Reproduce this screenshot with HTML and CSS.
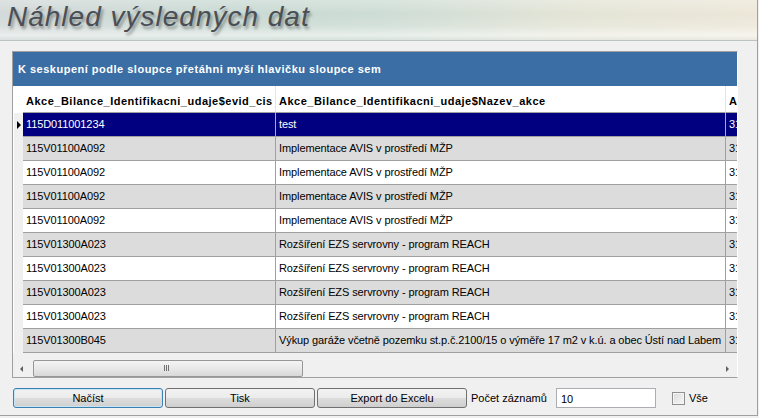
FILE: index.html
```html
<!DOCTYPE html>
<html lang="cs">
<head>
    <meta charset="UTF-8">
    <title>Náhled výsledných dat</title>
    <link rel="stylesheet" href="styles.css">
</head>
<body>
    <div class="window">
        <div class="title-bar">
            <h1 class="title">Náhled výsledných dat</h1>
        </div>

        <div class="main">
            <div class="data-grid">
                <div class="group-panel">K seskupení podle sloupce přetáhni myší hlavičku sloupce sem</div>

                <div class="grid-scroll">
                    <div class="grid-row grid-head">
                        <div class="cell indicator"></div>
                        <div class="cell">Akce_Bilance_Identifikacni_udaje$evid_cis</div>
                        <div class="cell">Akce_Bilance_Identifikacni_udaje$Nazev_akce</div>
                        <div class="cell">Al</div>
                    </div>
                    <div class="grid-row selected">
                        <div class="cell indicator"><span class="arrow"></span></div>
                        <div class="cell">115D011001234</div>
                        <div class="cell">test</div>
                        <div class="cell">31</div>
                    </div>
                    <div class="grid-row alt">
                        <div class="cell indicator"></div>
                        <div class="cell">115V01100A092</div>
                        <div class="cell">Implementace AVIS v prostředí MŽP</div>
                        <div class="cell">31</div>
                    </div>
                    <div class="grid-row">
                        <div class="cell indicator"></div>
                        <div class="cell">115V01100A092</div>
                        <div class="cell">Implementace AVIS v prostředí MŽP</div>
                        <div class="cell">31</div>
                    </div>
                    <div class="grid-row alt">
                        <div class="cell indicator"></div>
                        <div class="cell">115V01100A092</div>
                        <div class="cell">Implementace AVIS v prostředí MŽP</div>
                        <div class="cell">31</div>
                    </div>
                    <div class="grid-row">
                        <div class="cell indicator"></div>
                        <div class="cell">115V01100A092</div>
                        <div class="cell">Implementace AVIS v prostředí MŽP</div>
                        <div class="cell">31</div>
                    </div>
                    <div class="grid-row alt">
                        <div class="cell indicator"></div>
                        <div class="cell">115V01300A023</div>
                        <div class="cell">Rozšíření EZS servrovny - program REACH</div>
                        <div class="cell">31</div>
                    </div>
                    <div class="grid-row">
                        <div class="cell indicator"></div>
                        <div class="cell">115V01300A023</div>
                        <div class="cell">Rozšíření EZS servrovny - program REACH</div>
                        <div class="cell">31</div>
                    </div>
                    <div class="grid-row alt">
                        <div class="cell indicator"></div>
                        <div class="cell">115V01300A023</div>
                        <div class="cell">Rozšíření EZS servrovny - program REACH</div>
                        <div class="cell">31</div>
                    </div>
                    <div class="grid-row">
                        <div class="cell indicator"></div>
                        <div class="cell">115V01300A023</div>
                        <div class="cell">Rozšíření EZS servrovny - program REACH</div>
                        <div class="cell">31</div>
                    </div>
                    <div class="grid-row alt">
                        <div class="cell indicator"></div>
                        <div class="cell">115V01300B045</div>
                        <div class="cell">Výkup garáže včetně pozemku st.p.č.2100/15 o výměře 17 m2 v k.ú. a obec Ústí nad Labem</div>
                        <div class="cell">31</div>
                    </div>
                </div>

                <div class="hscroll">
                    <span class="hscroll-arrow left"></span>
                    <div class="hscroll-track">
                        <div class="hscroll-thumb"><span class="grip"></span></div>
                    </div>
                    <span class="hscroll-arrow right"></span>
                </div>
            </div>

            <div class="controls">
                <button class="btn focused">Načíst</button>
                <button class="btn">Tisk</button>
                <button class="btn">Export do Excelu</button>
                <label class="count-label" for="count">Počet záznamů</label>
                <input class="count-input" id="count" type="text" value="10">
                <label class="check-all"><span class="checkbox"></span>Vše</label>
            </div>
        </div>
    </div>
</body>
</html>
```

FILE: styles.css
```css
html, body {
    margin: 0;
    padding: 0;
    background: #f0f0f0;
}

body {
    font-family: "Liberation Sans", Arial, sans-serif;
    font-size: 11px;
    color: #000;
}

.window {
    width: 757px;
    height: 415px;
    border-right: 1px solid #a0a0a0;
    border-bottom: 1px solid #a0a0a0;
    background: #f0f0f0;
    overflow: hidden;
}

/* title band */
.title-bar {
    height: 40px;
    border-bottom: 1px solid #bcc4c1;
    background:
        linear-gradient(to bottom, rgba(255, 255, 255, 0.25) 0%, rgba(255, 255, 255, 0) 35%, rgba(255, 255, 255, 0.15) 65%, rgba(255, 255, 255, 0.55) 88%, rgba(230, 235, 232, 0.4) 100%),
        linear-gradient(to right, #d2d9d8 0%, #c9d9d3 30%, #cddcd5 50%, #e3e4d6 75%, #ece7d8 100%);
}

.title {
    margin: 0;
    padding: 1px 0 0 7px;
    font-family: "Liberation Sans", Arial, sans-serif;
    font-size: 28px;
    font-weight: normal;
    font-style: italic;
    letter-spacing: 1px;
    line-height: 32px;
    color: #4a4f56;
    text-shadow: 2px 3px 3px rgba(0, 0, 0, 0.35);
}

.main {
    padding: 10px 0 0 12px;
}

/* data grid */
.data-grid {
    width: 724px;
    border: 1px solid #a0a0a0;
    border-right-color: #ffffff;
    border-bottom-color: #a0a0a0;
    background: #f0f0f0;
}

.group-panel {
    height: 34px;
    line-height: 35px;
    padding-left: 5px;
    background: #3b6ea5;
    color: #ffffff;
    font-weight: bold;
    letter-spacing: 0.5px;
    white-space: nowrap;
}

.grid-scroll {
    width: 724px;
    overflow: hidden;
}

.grid-row {
    display: grid;
    grid-template-columns: 10px 253px 450px 12px;
    height: 24px;
    background: #ffffff;
}

.grid-row.alt {
    background: #dcdcdc;
}

.cell {
    padding-left: 3px;
    line-height: 23px;
    letter-spacing: -0.1px;
    border-right: 1px solid #a0a0a0;
    border-bottom: 1px solid #a0a0a0;
    white-space: nowrap;
    overflow: hidden;
}

.cell:last-child {
    border-right: none;
}

.cell.indicator {
    position: relative;
    padding: 0;
    background: #f0f0f0;
    border-right: none;
    border-bottom: none;
    border-left: 1px solid #ffffff;
}

.grid-head {
    height: 27px;
    background: #ffffff;
}

.grid-head .cell {
    line-height: 30px;
    font-weight: bold;
    letter-spacing: 0.5px;
    border-right-color: #e4e4e4;
    border-bottom-color: #a0a0a0;
}

.grid-head .cell.indicator {
    background: #ffffff;
}

.grid-row.selected {
    background: #000080;
    color: #ffffff;
}

.grid-row.selected .cell {
    border-right-color: #a8a8c8;
}

.arrow {
    position: absolute;
    left: 3px;
    top: 8px;
    width: 0;
    height: 0;
    border-top: 4px solid transparent;
    border-bottom: 4px solid transparent;
    border-left: 4px solid #000000;
}

/* horizontal scrollbar */
.hscroll {
    display: flex;
    align-items: center;
    height: 17px;
    margin-top: 7px;
}

.hscroll-arrow {
    width: 0;
    height: 0;
    border-top: 3px solid transparent;
    border-bottom: 3px solid transparent;
}

.hscroll-arrow.left {
    margin: 0 0 0 7px;
    border-right: 3px solid #606060;
}

.hscroll-arrow.right {
    margin: 0 8px 0 0;
    border-left: 3px solid #606060;
}

.hscroll-track {
    flex: 1;
    height: 17px;
    padding: 0 0 0 10px;
}

.hscroll-thumb {
    position: relative;
    width: 268px;
    height: 15px;
    border: 1px solid #979797;
    border-radius: 2px;
    background: linear-gradient(to bottom, #f4f4f4 0%, #e8e8e8 50%, #d8d8d8 100%);
}

.grip {
    position: absolute;
    left: 130px;
    top: 4px;
    width: 1px;
    height: 6px;
    background: #707070;
    box-shadow: 2px 0 0 #707070, 4px 0 0 #707070;
}

/* bottom controls */
.controls {
    display: flex;
    align-items: center;
    height: 20px;
    margin-top: 10px;
    padding-left: 1px;
}

.btn {
    width: 150px;
    height: 20px;
    margin-right: 2px;
    padding: 0;
    border: 1px solid #707070;
    border-radius: 3px;
    background: linear-gradient(to bottom, #f2f2f2 0%, #ebebeb 50%, #dddddd 51%, #cfcfcf 100%);
    font-family: "Liberation Sans", Arial, sans-serif;
    font-size: 11px;
    color: #000000;
}

.btn.focused {
    border-color: #3c7fb1;
    box-shadow: inset 0 0 0 1px #c4e5f6;
}

.count-label {
    margin-left: 2px;
    width: 85px;
}

.count-input {
    box-sizing: border-box;
    width: 100px;
    height: 20px;
    margin: 0;
    padding: 1px 4px 0;
    border: 1px solid #abadb3;
    background: #ffffff;
    font-family: "Liberation Sans", Arial, sans-serif;
    font-size: 11px;
}

.check-all {
    display: flex;
    align-items: center;
    margin-left: 16px;
}

.checkbox {
    box-sizing: border-box;
    width: 13px;
    height: 13px;
    margin-right: 4px;
    border: 1px solid #8f8f8f;
    background: linear-gradient(135deg, #dcdcdc 0%, #f6f6f6 100%);
    box-shadow: inset 0 0 0 1px #f4f4f4;
}
```
